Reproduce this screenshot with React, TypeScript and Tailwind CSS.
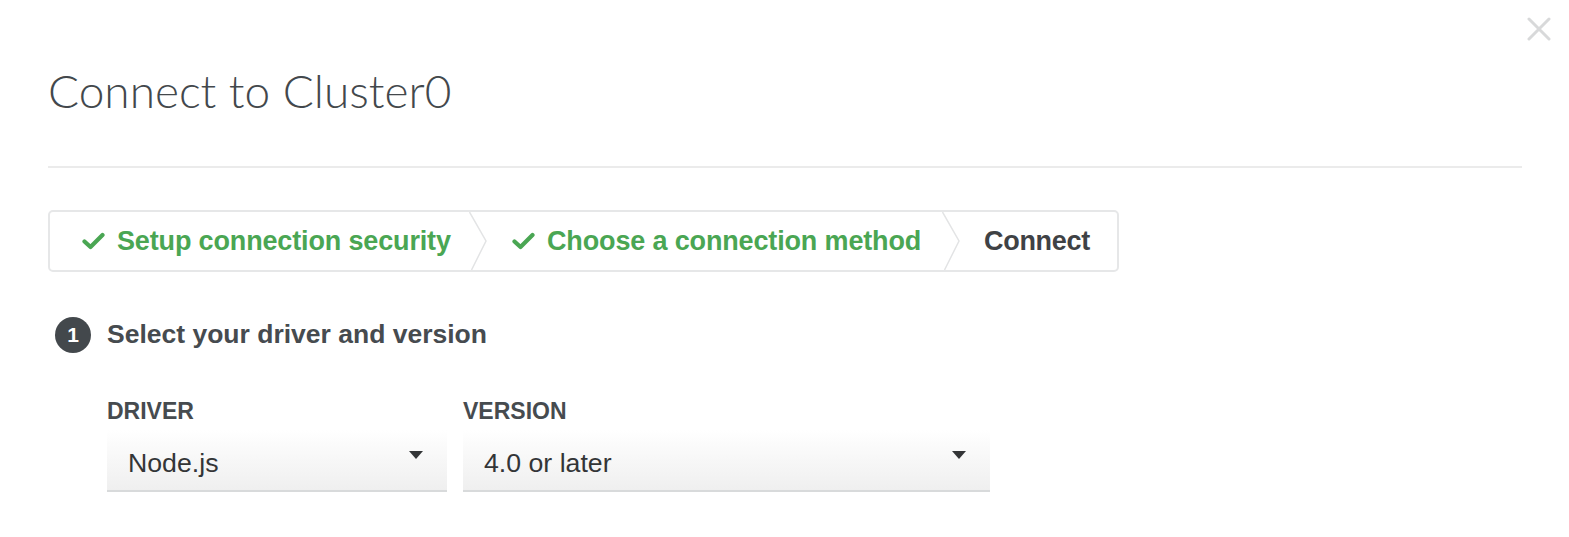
import React from "react";

const Check = () => (
  <svg width="23" height="18" viewBox="0 0 23 18" className="shrink-0">
    <path d="M2.5 9.5 L8.5 15 L20.5 3" fill="none" stroke="#4aa653" strokeWidth="4.2" strokeLinecap="round" strokeLinejoin="round" />
  </svg>
);

const Chevron = () => (
  <svg width="18" height="58" viewBox="0 0 18 58" className="shrink-0">
    <polyline points="0.5,0 17,29 2.5,58" fill="none" stroke="#e3e4e5" strokeWidth="1.5" />
  </svg>
);

const Caret = () => (
  <svg width="14" height="8" viewBox="0 0 14 8" className="shrink-0">
    <path d="M0 0 H14 L7 8 Z" fill="#333537" />
  </svg>
);

export default function App() {
  return (
    <div className="relative w-[1569px] h-[537px] bg-white overflow-hidden" style={{ fontFamily: '"Liberation Sans", Arial, sans-serif' }}>
      <button className="absolute right-[18px] top-[17px] w-[24px] h-[24px] flex items-center justify-center" aria-label="Close">
        <svg width="24" height="24" viewBox="0 0 24 24">
          <path d="M2 2 L22 22 M22 2 L2 22" stroke="#d8d9da" strokeWidth="3" strokeLinecap="round" />
        </svg>
      </button>

      <div className="pl-[48px] pr-[47px] pt-[63px]">
        <h1 className="text-[46px] leading-[56px] text-[#43484c] font-light" style={{ fontFamily: 'Lato, "Liberation Sans", sans-serif' }}>
          Connect to Cluster0
        </h1>
        <div className="mt-[47px] h-[2px] bg-[#ebebeb]" />

        <div className="mt-[42px] w-[1071px] h-[62px] border-2 border-[#e6e7e8] rounded-[5px] flex items-center">
          <div className="w-[419px] pl-[32px] flex items-center gap-[12px] text-[#4aa653] font-bold text-[27px] tracking-[-0.15px]">
            <Check />
            <span>Setup connection security</span>
          </div>
          <Chevron />
          <div className="w-[455px] pl-[25px] flex items-center gap-[12px] text-[#4aa653] font-bold text-[27px] tracking-[-0.15px]">
            <Check />
            <span>Choose a connection method</span>
          </div>
          <Chevron />
          <div className="flex-1 pl-[24px] text-[#3f4245] font-bold text-[27px] tracking-[-0.3px]">Connect</div>
        </div>

        <div className="mt-[43px] flex items-center">
          <div className="ml-[7px] w-[36px] h-[36px] rounded-full bg-[#43484c] text-white font-bold text-[21px] flex items-center justify-center">
            1
          </div>
          <div className="ml-[16px] text-[26.5px] font-bold text-[#464b4f]">Select your driver and version</div>
        </div>

        <div className="mt-[43px] ml-[59px] flex gap-[16px]">
          <div className="w-[340px]">
            <div className="text-[23px] font-bold text-[#464b4f] leading-[26px]">DRIVER</div>
            <div className="mt-[6px] h-[62px] flex items-center justify-between pl-[21px] pr-[24px] bg-gradient-to-b from-white to-[#efefef] border-b-2 border-[#d8dadb]">
              <span className="text-[26.7px] text-[#333537] mt-[6px]">Node.js</span>
              <span className="-mt-[10px]"><Caret /></span>
            </div>
          </div>
          <div className="w-[527px]">
            <div className="text-[23px] font-bold text-[#464b4f] leading-[26px]">VERSION</div>
            <div className="mt-[6px] h-[62px] flex items-center justify-between pl-[21px] pr-[24px] bg-gradient-to-b from-white to-[#efefef] border-b-2 border-[#d8dadb]">
              <span className="text-[26.7px] text-[#333537] mt-[6px]">4.0 or later</span>
              <span className="-mt-[10px]"><Caret /></span>
            </div>
          </div>
        </div>
      </div>
    </div>
  );
}
